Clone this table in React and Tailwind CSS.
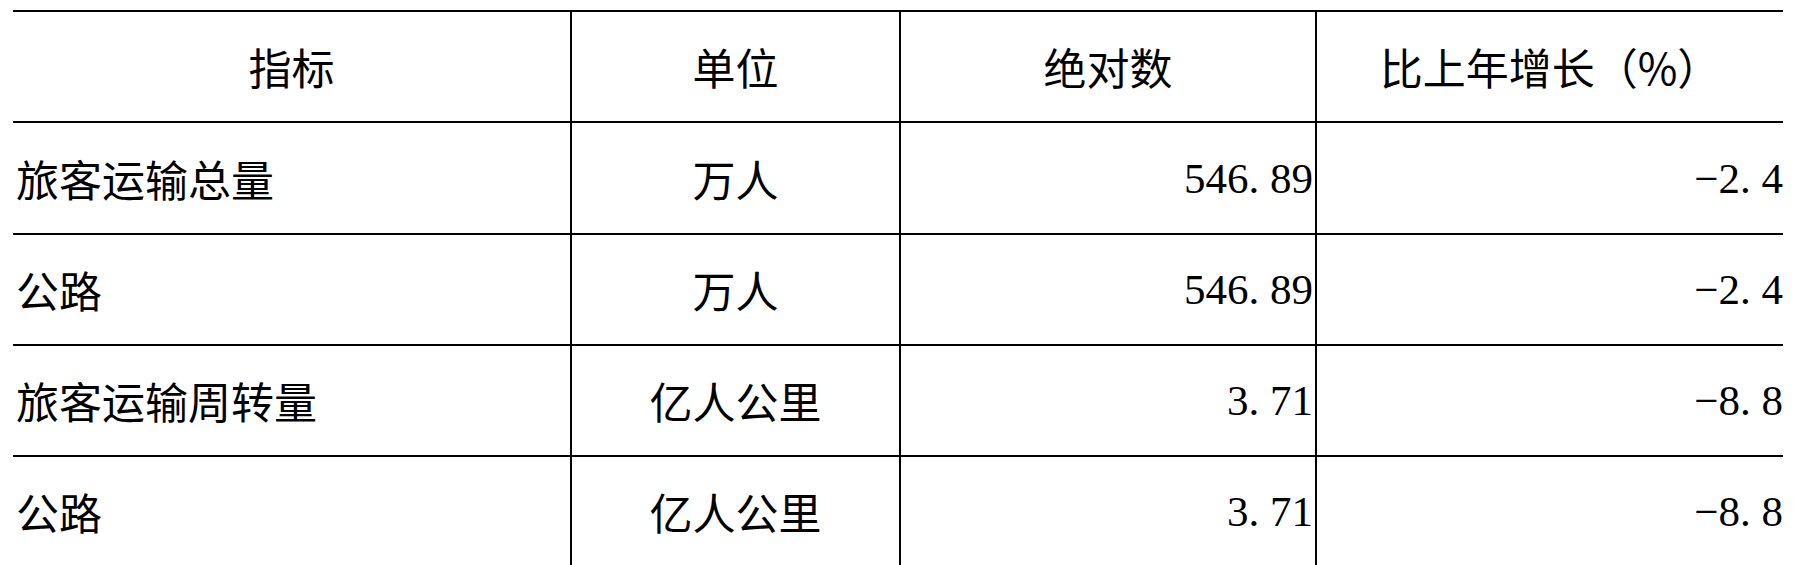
const header = ["指标", "单位", "绝对数", "比上年增长（%）"];
const rows = [
  { name: "旅客运输总量", unit: "万人", value: "546.89", change: "−2.4", h: "h-[112px]" },
  { name: "公路", unit: "万人", value: "546.89", change: "−2.4", h: "h-[111px]" },
  { name: "旅客运输周转量", unit: "亿人公里", value: "3.71", change: "−8.8", h: "h-[111px]" },
  { name: "公路", unit: "亿人公里", value: "3.71", change: "−8.8", h: "h-[111px]" },
];

const cjk = { fontFamily: '"Noto Sans CJK SC", "Noto Sans", sans-serif' };
const num = { fontFamily: '"Liberation Serif", "Noto Sans CJK SC", serif' };

function Num({ text }) {
  const parts = text.split(".");
  return (
    <span style={num} className="whitespace-nowrap">
      {parts[0]}
      <span className="inline-block w-[0.5em]">.</span>
      {parts[1]}
    </span>
  );
}

export default function App() {
  return (
    <div className="w-[1793px] h-[565px] overflow-hidden bg-white pt-[10px] pl-[13px] text-black">
      <div className="w-[1770px]">
        <div className="grid grid-cols-[557px_329px_416px_468px] h-[111px] border-t-2 border-black text-[43px] leading-none" style={cjk}>
          {header.map((h, i) => (
            <div
              key={i}
              className={`flex items-center justify-center ${i > 0 ? "border-l-2 border-black" : ""}`}
            >
              {h}
            </div>
          ))}
        </div>
        {rows.map((r, idx) => (
          <div
            key={idx}
            className={`grid grid-cols-[557px_329px_416px_468px] ${r.h} border-t-2 border-black text-[43px] leading-none`}
          >
            <div className="flex items-center pl-[3px]" style={cjk}>
              {r.name}
            </div>
            <div className="flex items-center justify-center border-l-2 border-black" style={cjk}>
              {r.unit}
            </div>
            <div className="flex items-center justify-end border-l-2 border-black pr-[2px]">
              <Num text={r.value} />
            </div>
            <div className="flex items-center justify-end border-l-2 border-black pr-0">
              <Num text={r.change} />
            </div>
          </div>
        ))}
      </div>
    </div>
  );
}
